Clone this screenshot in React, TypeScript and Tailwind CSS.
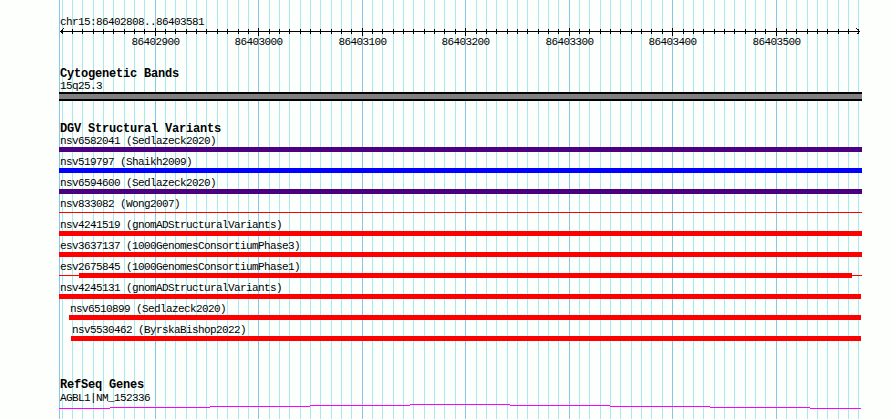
import React from "react";

const START = 86402808;
const END = 86403581;
const xOf = (bp: number) => 60 + ((bp - START) * 800) / (END - START);

const gridBps: number[] = [];
for (let bp = 86402810; bp <= 86403580; bp += 10) gridBps.push(bp);

type Row = {
  label: string;
  color: string;
  left: number;
  right: number;
  kind?: "thin" | "split";
};

const rows: Row[] = [
  { label: "nsv6582041 (Sedlazeck2020)", color: "bg-[#4b0082]", left: 59, right: 862 },
  { label: "nsv519797 (Shaikh2009)", color: "bg-[#0000ff]", left: 59, right: 862 },
  { label: "nsv6594600 (Sedlazeck2020)", color: "bg-[#4b0082]", left: 59, right: 862 },
  { label: "nsv833082 (Wong2007)", color: "bg-[#ff0000]", left: 59, right: 862, kind: "thin" },
  { label: "nsv4241519 (gnomADStructuralVariants)", color: "bg-[#ff0000]", left: 59, right: 862 },
  { label: "esv3637137 (1000GenomesConsortiumPhase3)", color: "bg-[#ff0000]", left: 59, right: 862 },
  { label: "esv2675845 (1000GenomesConsortiumPhase1)", color: "bg-[#ff0000]", left: 59, right: 862, kind: "split" },
  { label: "nsv4245131 (gnomADStructuralVariants)", color: "bg-[#ff0000]", left: 59, right: 861 },
  { label: "nsv6510899 (Sedlazeck2020)", color: "bg-[#ff0000]", left: 69, right: 861 },
  { label: "nsv5530462 (ByrskaBishop2022)", color: "bg-[#ff0000]", left: 71, right: 861 },
];

function Grid() {
  return (
    <svg
      className="absolute inset-0"
      width={890}
      height={419}
      shapeRendering="crispEdges"
    >
      <rect x={59} y={0} width={1} height={419} fill="#88c6ea" />
      {gridBps.map((bp) => (
        <rect
          key={bp}
          x={Math.floor(xOf(bp))}
          y={0}
          width={1}
          height={419}
          fill={bp % 100 === 0 ? "#88c6ea" : "#a8e8ee"}
        />
      ))}
    </svg>
  );
}

function Ruler() {
  return (
    <svg width={890} height={22} className="block" shapeRendering="crispEdges">
      <rect x={60} y={3} width={800} height={1} fill="#000" />
      <path d="M63.5 0.5 L60.5 3.5 L63.5 6.5" stroke="#000" fill="none" />
      <path d="M856.5 0.5 L859.5 3.5 L856.5 6.5" stroke="#000" fill="none" />
      {gridBps.map((bp) => {
        const x = Math.floor(xOf(bp));
        const major = bp % 100 === 0;
        return (
          <rect
            key={bp}
            x={x}
            y={major ? 0 : 1}
            width={1}
            height={major ? 8 : 5}
            fill="#000"
          />
        );
      })}
      {gridBps
        .filter((bp) => bp % 100 === 0)
        .map((bp) => (
          <text
            key={bp}
            x={Math.floor(xOf(bp)) + 0.5}
            y={17}
            textAnchor="middle"
            fontSize={11}
            letterSpacing={-0.6}
            fontFamily="'Liberation Mono', monospace"
            fill="#000"
          >
            {bp}
          </text>
        ))}
    </svg>
  );
}

function Bar({ row }: { row: Row }) {
  const w = row.right - row.left;
  if (row.kind === "thin") {
    return (
      <div className="flex h-[5px] items-center" style={{ marginLeft: row.left }}>
        <div className={`h-px ${row.color}`} style={{ width: w }} />
      </div>
    );
  }
  if (row.kind === "split") {
    return (
      <div className="flex h-[5px] items-center" style={{ marginLeft: row.left }}>
        <div className={`h-px w-[20px] ${row.color}`} />
        <div className={`h-[5px] w-[773px] ${row.color}`} />
        <div className={`h-px w-[10px] ${row.color}`} />
      </div>
    );
  }
  return <div className={`h-[5px] ${row.color}`} style={{ marginLeft: row.left, width: w }} />;
}

function GeneLine() {
  const segs: [number, number, number][] = [
    [59, 110, 408],
    [110, 210, 407],
    [210, 310, 406],
    [310, 410, 405],
    [410, 510, 404],
    [510, 610, 405],
    [610, 710, 406],
    [710, 810, 407],
    [810, 861, 408],
  ];
  return (
    <svg width={890} height={12} className="block" shapeRendering="crispEdges">
      {segs.map(([a, b, y]) => (
        <rect key={a} x={a} y={y - 404} width={b - a} height={1} fill="#ff00ff" />
      ))}
    </svg>
  );
}

export default function App() {
  return (
    <div className="relative h-[419px] w-[890px] overflow-hidden bg-[#fdfffd] font-['Liberation_Mono',monospace] text-black">
      <Grid />
      <div className="relative flex flex-col">
        <div className="h-[16px]" />
        <div className="pl-[60px] text-[11px] leading-[12px] tracking-[-0.6px]">chr15:86402808..86403581</div>
        <Ruler />
        <div className="h-[18px]" />
        <div className="pl-[60px] text-[12px] font-bold leading-[13px] tracking-[-0.2px]">Cytogenetic Bands</div>
        <div className="pl-[60px] text-[11px] leading-[11px] tracking-[-0.6px]">15q25.3</div>
        <div className="ml-[59px] h-[9px] w-[803px] border-y-2 border-black bg-[#808080]" />
        <div className="h-[22px]" />
        <div className="pl-[60px] text-[12px] font-bold leading-[13px] tracking-[-0.2px]">DGV Structural Variants</div>
        <div className="flex flex-col gap-[5px]">
          {rows.map((r) => (
            <div key={r.label} className="flex flex-col">
              <div
                className="whitespace-pre text-[11px] leading-[11px] tracking-[-0.6px]"
                style={{ paddingLeft: r.left + 1 }}
              >
                {r.label}
              </div>
              <Bar row={r} />
            </div>
          ))}
        </div>
        <div className="h-[38px]" />
        <div className="pl-[60px] text-[12px] font-bold leading-[13px] tracking-[-0.2px]">RefSeq Genes</div>
        <div className="pl-[60px] text-[11px] leading-[12px] tracking-[-0.6px]">AGBL1|NM_152336</div>
        <GeneLine />
      </div>
    </div>
  );
}
